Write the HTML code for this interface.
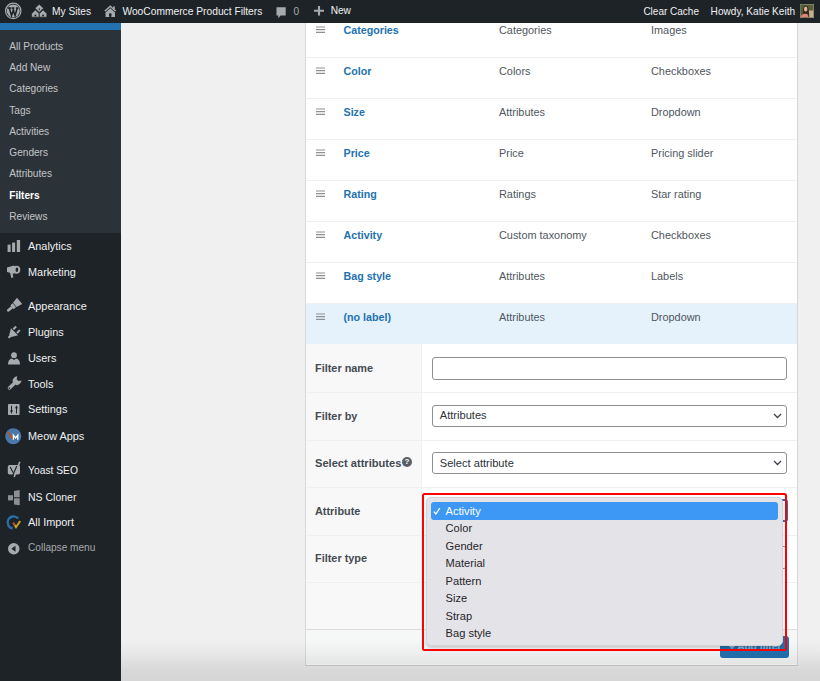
<!DOCTYPE html>
<html><head><meta charset="utf-8"><style>
html,body{margin:0;padding:0;width:820px;height:681px;overflow:hidden;background:#f0f0f1;font-family:"Liberation Sans", sans-serif}
.t{position:absolute;white-space:nowrap}
.r{position:absolute}
svg.r{overflow:visible}
</style></head><body>
<div class="r" style="left:305px;top:0px;width:493px;height:665.6px;background:#fff;border-left:1px solid #d8d8da;border-right:1px solid #d8d8da;border-bottom:1.6px solid #cfcfd1;box-sizing:border-box"></div>
<svg class="r" style="left:316px;top:24.8px;" width="9" height="9" viewBox="0 0 9 9"><path d="M0 2 H9 M0 4.7 H9 M0 7.4 H9" stroke="#8c8f94" stroke-width="1.2"/></svg>
<div class="t" style="left:343.5px;top:24.84px;font-size:10.7px;line-height:10.7px;color:#2271b1;font-weight:700;">Categories</div>
<div class="t" style="left:499px;top:24.97px;font-size:10.9px;line-height:10.9px;color:#50575e;font-weight:400;">Categories</div>
<div class="t" style="left:651px;top:24.97px;font-size:10.9px;line-height:10.9px;color:#50575e;font-weight:400;">Images</div>
<div class="r" style="left:306px;top:56.9px;width:491px;height:1px;background:#f0f0f1"></div>
<svg class="r" style="left:316px;top:65.8px;" width="9" height="9" viewBox="0 0 9 9"><path d="M0 2 H9 M0 4.7 H9 M0 7.4 H9" stroke="#8c8f94" stroke-width="1.2"/></svg>
<div class="t" style="left:343.5px;top:65.84px;font-size:10.7px;line-height:10.7px;color:#2271b1;font-weight:700;">Color</div>
<div class="t" style="left:499px;top:65.97px;font-size:10.9px;line-height:10.9px;color:#50575e;font-weight:400;">Colors</div>
<div class="t" style="left:651px;top:65.97px;font-size:10.9px;line-height:10.9px;color:#50575e;font-weight:400;">Checkboxes</div>
<div class="r" style="left:306px;top:97.9px;width:491px;height:1px;background:#f0f0f1"></div>
<svg class="r" style="left:316px;top:106.8px;" width="9" height="9" viewBox="0 0 9 9"><path d="M0 2 H9 M0 4.7 H9 M0 7.4 H9" stroke="#8c8f94" stroke-width="1.2"/></svg>
<div class="t" style="left:343.5px;top:106.84px;font-size:10.7px;line-height:10.7px;color:#2271b1;font-weight:700;">Size</div>
<div class="t" style="left:499px;top:106.97px;font-size:10.9px;line-height:10.9px;color:#50575e;font-weight:400;">Attributes</div>
<div class="t" style="left:651px;top:106.97px;font-size:10.9px;line-height:10.9px;color:#50575e;font-weight:400;">Dropdown</div>
<div class="r" style="left:306px;top:138.9px;width:491px;height:1px;background:#f0f0f1"></div>
<svg class="r" style="left:316px;top:147.8px;" width="9" height="9" viewBox="0 0 9 9"><path d="M0 2 H9 M0 4.7 H9 M0 7.4 H9" stroke="#8c8f94" stroke-width="1.2"/></svg>
<div class="t" style="left:343.5px;top:147.84px;font-size:10.7px;line-height:10.7px;color:#2271b1;font-weight:700;">Price</div>
<div class="t" style="left:499px;top:147.97px;font-size:10.9px;line-height:10.9px;color:#50575e;font-weight:400;">Price</div>
<div class="t" style="left:651px;top:147.97px;font-size:10.9px;line-height:10.9px;color:#50575e;font-weight:400;">Pricing slider</div>
<div class="r" style="left:306px;top:179.9px;width:491px;height:1px;background:#f0f0f1"></div>
<svg class="r" style="left:316px;top:188.8px;" width="9" height="9" viewBox="0 0 9 9"><path d="M0 2 H9 M0 4.7 H9 M0 7.4 H9" stroke="#8c8f94" stroke-width="1.2"/></svg>
<div class="t" style="left:343.5px;top:188.84px;font-size:10.7px;line-height:10.7px;color:#2271b1;font-weight:700;">Rating</div>
<div class="t" style="left:499px;top:188.97px;font-size:10.9px;line-height:10.9px;color:#50575e;font-weight:400;">Ratings</div>
<div class="t" style="left:651px;top:188.97px;font-size:10.9px;line-height:10.9px;color:#50575e;font-weight:400;">Star rating</div>
<div class="r" style="left:306px;top:220.9px;width:491px;height:1px;background:#f0f0f1"></div>
<svg class="r" style="left:316px;top:229.8px;" width="9" height="9" viewBox="0 0 9 9"><path d="M0 2 H9 M0 4.7 H9 M0 7.4 H9" stroke="#8c8f94" stroke-width="1.2"/></svg>
<div class="t" style="left:343.5px;top:229.84px;font-size:10.7px;line-height:10.7px;color:#2271b1;font-weight:700;">Activity</div>
<div class="t" style="left:499px;top:229.97px;font-size:10.9px;line-height:10.9px;color:#50575e;font-weight:400;">Custom taxonomy</div>
<div class="t" style="left:651px;top:229.97px;font-size:10.9px;line-height:10.9px;color:#50575e;font-weight:400;">Checkboxes</div>
<div class="r" style="left:306px;top:261.9px;width:491px;height:1px;background:#f0f0f1"></div>
<svg class="r" style="left:316px;top:270.8px;" width="9" height="9" viewBox="0 0 9 9"><path d="M0 2 H9 M0 4.7 H9 M0 7.4 H9" stroke="#8c8f94" stroke-width="1.2"/></svg>
<div class="t" style="left:343.5px;top:270.84px;font-size:10.7px;line-height:10.7px;color:#2271b1;font-weight:700;">Bag style</div>
<div class="t" style="left:499px;top:270.97px;font-size:10.9px;line-height:10.9px;color:#50575e;font-weight:400;">Attributes</div>
<div class="t" style="left:651px;top:270.97px;font-size:10.9px;line-height:10.9px;color:#50575e;font-weight:400;">Labels</div>
<div class="r" style="left:306px;top:303.7px;width:491px;height:40px;background:#e5f2fc"></div>
<div class="r" style="left:306px;top:302.9px;width:491px;height:1px;background:#f0f0f1"></div>
<svg class="r" style="left:316px;top:311.8px;" width="9" height="9" viewBox="0 0 9 9"><path d="M0 2 H9 M0 4.7 H9 M0 7.4 H9" stroke="#8c8f94" stroke-width="1.2"/></svg>
<div class="t" style="left:343.5px;top:311.84px;font-size:10.7px;line-height:10.7px;color:#2271b1;font-weight:700;">(no label)</div>
<div class="t" style="left:499px;top:311.97px;font-size:10.9px;line-height:10.9px;color:#50575e;font-weight:400;">Attributes</div>
<div class="t" style="left:651px;top:311.97px;font-size:10.9px;line-height:10.9px;color:#50575e;font-weight:400;">Dropdown</div>
<div class="r" style="left:306px;top:343.8px;width:116px;height:285.2px;background:#f8f8f8;border-right:1px solid #f0f0f1;box-sizing:border-box"></div>
<div class="r" style="left:422px;top:343.8px;width:375px;height:285.2px;background:#fff"></div>
<div class="r" style="left:306px;top:392.0px;width:491px;height:1px;background:#f0f0f1"></div>
<div class="r" style="left:306px;top:439.7px;width:491px;height:1px;background:#f0f0f1"></div>
<div class="r" style="left:306px;top:487.3px;width:491px;height:1px;background:#f0f0f1"></div>
<div class="r" style="left:306px;top:534.6px;width:491px;height:1px;background:#f0f0f1"></div>
<div class="r" style="left:306px;top:582.0px;width:491px;height:1px;background:#f0f0f1"></div>
<div class="r" style="left:306px;top:628.5px;width:491px;height:35.5px;background:#f6f7f7;border-top:1px solid #dcdcde;box-sizing:border-box"></div>
<div class="t" style="left:315px;top:362.97px;font-size:10.9px;line-height:10.9px;color:#454b52;font-weight:700;">Filter name</div>
<div class="t" style="left:315px;top:410.52px;font-size:10.9px;line-height:10.9px;color:#454b52;font-weight:700;">Filter by</div>
<div class="t" style="left:315px;top:458.00px;font-size:11.1px;line-height:11.1px;color:#454b52;font-weight:700;">Select attributes</div>
<div class="t" style="left:315px;top:505.62px;font-size:10.9px;line-height:10.9px;color:#454b52;font-weight:700;">Attribute</div>
<div class="t" style="left:315px;top:552.97px;font-size:10.9px;line-height:10.9px;color:#454b52;font-weight:700;">Filter type</div>
<div class="r" style="left:402px;top:456.8px;width:10px;height:10px;border-radius:50%;background:#5a5f65;color:#fff;font:700 8px/10px &quot;Liberation Sans&quot;, sans-serif;text-align:center">?</div>
<div class="r" style="left:431.8px;top:357.3px;width:355.40000000000003px;height:22.399999999999977px;background:#fff;border:1px solid #8c8f94;border-radius:3px;box-sizing:border-box"></div>
<div class="r" style="left:431.8px;top:404.5px;width:355.40000000000003px;height:22.100000000000023px;background:#fff;border:1px solid #8c8f94;border-radius:3px;box-sizing:border-box"></div>
<div class="t" style="left:439.8px;top:410.05px;font-size:11.1px;line-height:11.1px;color:#2c3338;font-weight:400;">Attributes</div>
<svg class="r" style="left:773px;top:412.55px;" width="9" height="6" viewBox="0 0 9 6"><path d="M1 1 L4.5 4.5 L8 1" fill="none" stroke="#3c434a" stroke-width="1.3"/></svg>
<div class="r" style="left:431.8px;top:452.0px;width:355.40000000000003px;height:22.19999999999999px;background:#fff;border:1px solid #8c8f94;border-radius:3px;box-sizing:border-box"></div>
<div class="t" style="left:439.8px;top:457.60px;font-size:11.1px;line-height:11.1px;color:#2c3338;font-weight:400;">Select attribute</div>
<svg class="r" style="left:773px;top:460.1px;" width="9" height="6" viewBox="0 0 9 6"><path d="M1 1 L4.5 4.5 L8 1" fill="none" stroke="#3c434a" stroke-width="1.3"/></svg>
<div class="r" style="left:431.8px;top:498.5px;width:356.40000000000003px;height:23.799999999999955px;background:#fff;border:2px solid #2271b1;border-radius:3px;box-sizing:border-box"></div>
<div class="r" style="left:431.8px;top:546.4px;width:355.40000000000003px;height:22.300000000000068px;background:#fff;border:1px solid #8c8f94;border-radius:3px;box-sizing:border-box"></div>
<div class="r" style="left:720px;top:635.5px;width:69px;height:22.4px;background:#2271b1;border-radius:3px"></div>
<div class="t" style="left:729px;top:641.83px;font-size:10px;line-height:10px;color:rgba(255,255,255,0.55);font-weight:600;">+ Add filter</div>
<div class="r" style="left:121px;top:640px;width:699px;height:41px;background:linear-gradient(to bottom,rgba(0,0,0,0) 0%,rgba(0,0,0,0.03) 30%,rgba(0,0,0,0.10) 75%,rgba(0,0,0,0.11) 100%)"></div>
<div class="r" style="left:426.2px;top:497.2px;width:357.00000000000006px;height:148.40000000000003px;background:#e4e3e8;border:1px solid #d3d2d8;border-radius:5px;box-sizing:border-box;box-shadow:0 1.5px 2.5px rgba(0,0,0,0.16)"></div>
<div class="r" style="left:430.7px;top:502.3px;width:347.7px;height:17.3px;background:#3d97f5;border-radius:3px"></div>
<div class="t" style="left:445.6px;top:506.00px;font-size:11.1px;line-height:11.1px;color:#fff;font-weight:400;">Activity</div>
<div class="t" style="left:445.6px;top:523.45px;font-size:11.1px;line-height:11.1px;color:#26252a;font-weight:400;">Color</div>
<div class="t" style="left:445.6px;top:540.90px;font-size:11.1px;line-height:11.1px;color:#26252a;font-weight:400;">Gender</div>
<div class="t" style="left:445.6px;top:558.35px;font-size:11.1px;line-height:11.1px;color:#26252a;font-weight:400;">Material</div>
<div class="t" style="left:445.6px;top:575.80px;font-size:11.1px;line-height:11.1px;color:#26252a;font-weight:400;">Pattern</div>
<div class="t" style="left:445.6px;top:593.25px;font-size:11.1px;line-height:11.1px;color:#26252a;font-weight:400;">Size</div>
<div class="t" style="left:445.6px;top:610.70px;font-size:11.1px;line-height:11.1px;color:#26252a;font-weight:400;">Strap</div>
<div class="t" style="left:445.6px;top:628.15px;font-size:11.1px;line-height:11.1px;color:#26252a;font-weight:400;">Bag style</div>
<svg class="r" style="left:433.3px;top:507px;" width="8" height="8" viewBox="0 0 8 8"><path d="M0.8 4.6 L2.9 7 L6.9 1" fill="none" stroke="#fff" stroke-width="1.35"/></svg>
<div class="r" style="left:421.5px;top:493.4px;width:365.6px;height:158.10000000000002px;border:2.9px solid #fe0000;border-radius:2.5px;box-sizing:border-box"></div>
<div class="r" style="left:0px;top:0px;width:820px;height:23px;background:#1d2327"></div>
<div class="r" style="left:0px;top:23px;width:121px;height:658px;background:#1d2327"></div>
<div class="r" style="left:0px;top:23px;width:121px;height:7px;background:#2271b1"></div>
<div class="r" style="left:0px;top:30px;width:121px;height:203.2px;background:#2c3338"></div>
<svg class="r" style="left:4.5px;top:3px;" width="17" height="16" viewBox="0 0 17 16"><circle cx="8.25" cy="7.9" r="7.7" fill="none" stroke="#a7aaad" stroke-width="1.2"/><circle cx="8.25" cy="7.9" r="6.5" fill="#a7aaad"/><path d="M2.9 5 H6 M4.3 5 L6.5 12.4 L8.3 7.4 L10.1 12.4 L12.3 5 M10.9 5 H13.6 M6.6 5 H9.4 M7.8 5 L8.9 8.3" fill="none" stroke="#1d2327" stroke-width="1.55"/></svg>
<svg class="r" style="left:31px;top:3px;" width="17" height="15" viewBox="0 0 17 15"><path d="M8.25 1.2 L12.6 5.2 L8.25 9.4 L3.9 5.2 Z" fill="#a7aaad" stroke="#1d2327" stroke-width="0.7"/><rect x="7.8" y="5.2" width="0.9" height="2.2" fill="#1d2327"/><path d="M0.6 10.6 L4.4 6.9 L8.2 10.6 V14.2 H0.6 Z" fill="#a7aaad" stroke="#1d2327" stroke-width="0.7"/><path d="M8.3 10.6 L12.1 6.9 L15.9 10.6 V14.2 H8.3 Z" fill="#a7aaad" stroke="#1d2327" stroke-width="0.7"/><circle cx="4.4" cy="12.4" r="1" fill="#1d2327"/><circle cx="12.1" cy="12.4" r="1" fill="#1d2327"/></svg>
<div class="t" style="left:52px;top:6.97px;font-size:10.2px;line-height:10.2px;color:#f0f0f1;font-weight:400;">My Sites</div>
<svg class="r" style="left:103.5px;top:5px;" width="12.5" height="12" viewBox="0 0 12.5 12"><path d="M6.25 0.3 L12.3 5.8 L11 6.6 L6.25 2.3 L1.5 6.6 L0.2 5.8 Z" fill="#a7aaad"/><rect x="9.2" y="1.3" width="1.6" height="3" fill="#a7aaad"/><path d="M6.25 3.3 L11 7.6 V12 H1.5 V7.6 Z" fill="#a7aaad"/><rect x="5" y="8.2" width="2.5" height="3.8" rx="1" fill="#1d2327"/></svg>
<div class="t" style="left:122.4px;top:6.92px;font-size:10.25px;line-height:10.25px;color:#f0f0f1;font-weight:400;">WooCommerce Product Filters</div>
<svg class="r" style="left:276px;top:6.5px;" width="10" height="11.5" viewBox="0 0 10 11.5"><path d="M0.5 0.3 H9.7 V8.5 H4.6 L2.3 11.2 V8.5 H0.5 Z" fill="#a7aaad"/></svg>
<div class="t" style="left:293.6px;top:6.55px;font-size:10.1px;line-height:10.1px;color:#a7aaad;font-weight:400;">0</div>
<svg class="r" style="left:313.8px;top:6.2px;" width="10" height="9.5" viewBox="0 0 10 9.5"><path d="M5 0 V9.5 M0 4.75 H10" stroke="#a7aaad" stroke-width="2.1"/></svg>
<div class="t" style="left:330.8px;top:6.27px;font-size:10.2px;line-height:10.2px;color:#f0f0f1;font-weight:400;letter-spacing:-0.15px">New</div>
<div class="t" style="left:643.4px;top:7.13px;font-size:10px;line-height:10px;color:#f0f0f1;font-weight:400;">Clear Cache</div>
<div class="t" style="left:710.6px;top:7.05px;font-size:10.1px;line-height:10.1px;color:#f0f0f1;font-weight:400;">Howdy, Katie Keith</div>
<svg class="r" style="left:800px;top:3.6px;" width="14" height="14" viewBox="0 0 14 14"><rect width="14" height="14" fill="#8f8f7a"/><rect x="0.7" y="0.7" width="12.6" height="12.6" fill="#58603a"/><rect x="7" y="6.5" width="6.3" height="6.8" fill="#c4b08a"/><rect x="0.7" y="0.7" width="3" height="9" fill="#4d6138"/><path d="M2.8 13.3 C2.6 6 3.2 1.5 5.7 1.5 C8.3 1.5 9.2 6 9.2 13.3 Z" fill="#3a261d"/><ellipse cx="5.7" cy="5" rx="1.7" ry="2.6" fill="#e0b4a0"/><path d="M0.7 13.3 C1.5 10 3.5 9.6 5.7 9.8 C7.5 10 8.3 11 8.5 13.3 Z" fill="#d9847c"/></svg>
<div class="t" style="left:9.3px;top:41.65px;font-size:10.1px;line-height:10.1px;color:#c3c4c7;font-weight:400;">All Products</div>
<div class="t" style="left:9.3px;top:62.95px;font-size:10.1px;line-height:10.1px;color:#c3c4c7;font-weight:400;">Add New</div>
<div class="t" style="left:9.3px;top:84.25px;font-size:10.1px;line-height:10.1px;color:#c3c4c7;font-weight:400;">Categories</div>
<div class="t" style="left:9.3px;top:105.55px;font-size:10.1px;line-height:10.1px;color:#c3c4c7;font-weight:400;">Tags</div>
<div class="t" style="left:9.3px;top:126.85px;font-size:10.1px;line-height:10.1px;color:#c3c4c7;font-weight:400;">Activities</div>
<div class="t" style="left:9.3px;top:148.15px;font-size:10.1px;line-height:10.1px;color:#c3c4c7;font-weight:400;">Genders</div>
<div class="t" style="left:9.3px;top:169.45px;font-size:10.1px;line-height:10.1px;color:#c3c4c7;font-weight:400;">Attributes</div>
<div class="t" style="left:9.3px;top:190.75px;font-size:10.1px;line-height:10.1px;color:#ffffff;font-weight:700;">Filters</div>
<div class="t" style="left:9.3px;top:212.05px;font-size:10.1px;line-height:10.1px;color:#c3c4c7;font-weight:400;">Reviews</div>
<div class="t" style="left:28px;top:240.77px;font-size:10.9px;line-height:10.9px;color:#f0f0f1;font-weight:400;">Analytics</div>
<div class="t" style="left:28px;top:266.97px;font-size:10.9px;line-height:10.9px;color:#f0f0f1;font-weight:400;">Marketing</div>
<div class="t" style="left:28px;top:301.07px;font-size:10.9px;line-height:10.9px;color:#f0f0f1;font-weight:400;">Appearance</div>
<div class="t" style="left:28px;top:326.57px;font-size:10.9px;line-height:10.9px;color:#f0f0f1;font-weight:400;">Plugins</div>
<div class="t" style="left:28px;top:352.77px;font-size:10.9px;line-height:10.9px;color:#f0f0f1;font-weight:400;">Users</div>
<div class="t" style="left:28px;top:378.57px;font-size:10.9px;line-height:10.9px;color:#f0f0f1;font-weight:400;">Tools</div>
<div class="t" style="left:28px;top:404.37px;font-size:10.9px;line-height:10.9px;color:#f0f0f1;font-weight:400;">Settings</div>
<div class="t" style="left:28px;top:430.67px;font-size:10.9px;line-height:10.9px;color:#f0f0f1;font-weight:400;">Meow Apps</div>
<div class="t" style="left:28px;top:465.58px;font-size:10.3px;line-height:10.3px;color:#f0f0f1;font-weight:400;">Yoast SEO</div>
<div class="t" style="left:28px;top:491.81px;font-size:10.5px;line-height:10.5px;color:#f0f0f1;font-weight:400;">NS Cloner</div>
<div class="t" style="left:28px;top:517.07px;font-size:10.9px;line-height:10.9px;color:#f0f0f1;font-weight:400;">All Import</div>
<div class="t" style="left:28px;top:543.05px;font-size:10.1px;line-height:10.1px;color:#a7aaad;font-weight:400;">Collapse menu</div>
<svg class="r" style="left:7px;top:240px;" width="14" height="12" viewBox="0 0 14 12"><rect x="0.6" y="4.6" width="3" height="7.4" fill="#a7aaad"/><rect x="5.1" y="2.6" width="3" height="9.4" fill="#a7aaad"/><rect x="9.8" y="0" width="3.3" height="12" fill="#a7aaad"/></svg>
<svg class="r" style="left:5px;top:264px;" width="16" height="16" viewBox="0 0 16 16"><path d="M2 3.6 L9 1.6 L9 9.8 L2 7.9 Z" fill="#a7aaad"/><circle cx="11.3" cy="5.7" r="4" fill="#a7aaad"/><ellipse cx="11.9" cy="5.7" rx="1.3" ry="2.3" fill="#1d2327"/><path d="M4.8 7.8 L6.4 14 L8.3 13.6 L7.6 8.5 Z" fill="#a7aaad"/></svg>
<svg class="r" style="left:3px;top:295px;" width="20" height="20" viewBox="0 0 20 20"><g transform="translate(4.3,16.2) rotate(-40)"><rect x="0" y="-1.4" width="7" height="2.8" rx="1.4" fill="#a7aaad"/><rect x="6.2" y="-2.6" width="3" height="5.2" fill="#a7aaad"/><path d="M9.8 -2.8 L16 -4 L16 4 L9.8 2.8 Z" fill="#a7aaad"/></g></svg>
<svg class="r" style="left:3px;top:320px;" width="20" height="20" viewBox="0 0 20 20"><g transform="translate(5.5,17.8) rotate(-45)"><rect x="0" y="-1.1" width="3" height="2.2" fill="#a7aaad"/><path d="M2.5 -1.5 L8.5 -5 L8.5 5 L2.5 1.5 Z" fill="#a7aaad"/><rect x="9.4" y="-3.6" width="4" height="2" fill="#a7aaad"/><rect x="9.4" y="1.6" width="4" height="2" fill="#a7aaad"/></g></svg>
<svg class="r" style="left:7.7px;top:351.5px;" width="12" height="12.5" viewBox="0 0 12 12.5"><circle cx="6" cy="3.2" r="2.9" fill="#a7aaad"/><path d="M0 12.5 C0 8.5 1.5 6.6 4 6.4 L6 8 L8 6.4 C10.5 6.6 12 8.5 12 12.5 Z" fill="#a7aaad"/></svg>
<svg class="r" style="left:3px;top:374px;" width="20" height="20" viewBox="0 0 20 20"><g transform="translate(5.2,15.2) rotate(-44)"><rect x="0" y="-1.7" width="10" height="3.4" rx="1.7" fill="#a7aaad"/><circle cx="1.5" cy="0" r="0.75" fill="#1d2327"/><path d="M8.5 -2.4 C9.5 -4.3 13.5 -4.8 15.5 -3 L13 -1.3 L13 1.3 L15.5 3 C13.5 4.8 9.5 4.3 8.5 2.4 Z" fill="#a7aaad"/></g></svg>
<svg class="r" style="left:8px;top:404.2px;" width="11.6" height="11" viewBox="0 0 11.6 11"><rect width="11.6" height="11" rx="0.8" fill="#a7aaad"/><path d="M3.5 1.8 V9.5 M8.5 1.8 V9.5" stroke="#1d2327" stroke-width="1"/><path d="M1.8 6.5 L3.5 8.8 L5.2 6.5 Z" fill="#1d2327"/><path d="M6.8 4.2 L8.5 1.9 L10.2 4.2 Z" fill="#1d2327"/></svg>
<svg class="r" style="left:5.4px;top:427.8px;" width="16.5" height="16.5" viewBox="0 0 16.5 16.5"><circle cx="8.25" cy="8.25" r="8" fill="#4a78ab"/><path d="M3.2 4.6 L7.4 10.2" stroke="#b4561f" stroke-width="1.9" stroke-linecap="round"/><path d="M8.4 11.8 V7.1 L10.6 10 L12.8 7.1 V11.8" fill="none" stroke="#fff" stroke-width="1.3"/></svg>
<svg class="r" style="left:6.5px;top:461px;" width="14.5" height="17" viewBox="0 0 14.5 17"><rect x="0.8" y="4" width="12.2" height="9.5" rx="1.8" fill="#a7aaad"/><path d="M12.8 0.8 L7.2 16" stroke="#a7aaad" stroke-width="1.6"/><path d="M3.2 6 L6 11.5 M9.8 5 L6 13.8 L5.5 15.5" stroke="#1d2327" stroke-width="1.1" fill="none"/></svg>
<svg class="r" style="left:7.9px;top:490.3px;" width="12" height="15.5" viewBox="0 0 12 15.5"><path d="M0 5.2 H5 V10.4 H0 Z" fill="#8c8f94"/><path d="M6 1 L11.7 0 V7.2 H6 Z" fill="#8c8f94"/><path d="M6 8.2 H11.7 V15.3 L6 14.4 Z" fill="#8c8f94"/></svg>
<svg class="r" style="left:5.5px;top:515.5px;" width="16" height="13" viewBox="0 0 16 13"><path d="M12.2 2.6 A6 6 0 1 0 6.8 12.4" fill="none" stroke="#2a6ea6" stroke-width="2.3"/><path d="M7.2 6.8 L10 11.2 L14.2 5" fill="none" stroke="#c9a12a" stroke-width="2"/><path d="M7.2 6.8 L8.8 9.3" stroke="#a8453a" stroke-width="2"/></svg>
<svg class="r" style="left:7.8px;top:542.5px;" width="11.5" height="11.5" viewBox="0 0 11.5 11.5"><circle cx="5.75" cy="5.75" r="5.75" fill="#a7aaad"/><path d="M7.5 2.8 L3.3 5.75 L7.5 8.7 Z" fill="#1d2327"/></svg>
</body></html>
